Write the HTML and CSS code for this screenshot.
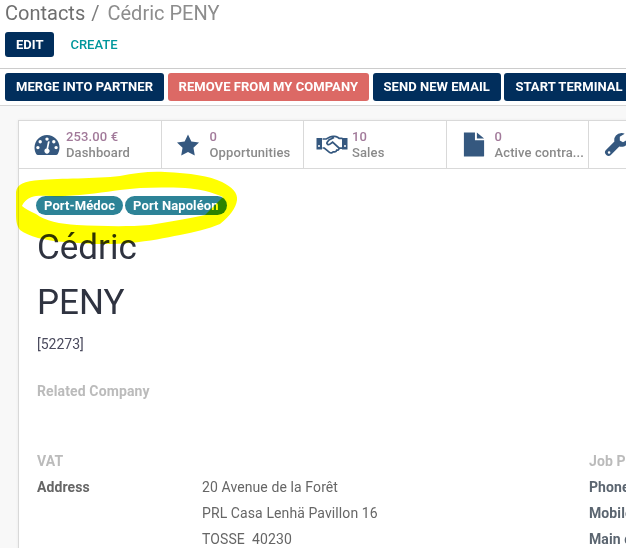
FILE: index.html
```html
<!DOCTYPE html>
<html lang="fr">
<head>
<meta charset="utf-8">
<title>Cédric PENY</title>
<link rel="stylesheet" href="styles.css">
</head>
<body>
<div class="page">
  <header class="panel">
    <div class="crumbs"><span class="crumb">Contacts</span><span class="sep">/</span><span class="crumb-current">Cédric PENY</span></div>
    <div class="main-buttons"><button class="btn btn-dark btn-edit">EDIT</button><button class="btn btn-link">CREATE</button></div>
  </header>
  <div class="actions">
    <button class="btn btn-dark">MERGE INTO PARTNER</button>
    <button class="btn btn-red">REMOVE FROM MY COMPANY</button>
    <button class="btn btn-dark">SEND NEW EMAIL</button>
    <button class="btn btn-dark">START TERMINAL</button>
  </div>
  <main class="content">
    <section class="sheet">
      <div class="stats">
        <div class="stat">
          <svg class="icon icon-gauge" viewBox="0 0 26 22"><path class="ic" fill-rule="evenodd" d="M13 1C6 1 0.5 6.6 0.5 13.5c0 2.6.7 4.6 1.7 6.4.4.7 1 1.1 1.8 1.1h18c.8 0 1.4-.4 1.8-1.1 1-1.8 1.7-3.8 1.7-6.4C25.500 6.600 20 1 13 1zM13 3.400a1.700 1.700 0 1 1 0 3.400 1.700 1.700 0 0 1 0-3.400zM6.200 6.100a1.700 1.700 0 1 1 0 3.400 1.700 1.700 0 0 1 0-3.400zM19.800 6.100a1.700 1.700 0 1 1 0 3.400 1.700 1.700 0 0 1 0-3.400zM3.900 11.900a1.700 1.700 0 1 1 0 3.400 1.700 1.700 0 0 1 0-3.400zM22.100 11.900a1.700 1.700 0 1 1 0 3.400 1.700 1.700 0 0 1 0-3.400zM15.500 8.300l-1.300 6.500c.9.500 1.400 1.300 1.400 2.300 0 1.500-1.200 2.600-2.600 2.600s-2.600-1.100-2.600-2.600c0-1.300.9-2.300 2.100-2.500l1.300-6.500c.1-.6.600-.9 1.200-.8.500.1.900.500.5 1z"/></svg>
          <div class="stat-text"><span class="value">253.00 €</span><span class="label">Dashboard</span></div>
        </div>
        <div class="stat">
          <svg class="icon icon-star" viewBox="0 0 24 23"><path class="ic" d="M12 .5l3.500 7.300 8 1.100-5.800 5.600 1.400 8L12 18.700l-7.100 3.800 1.400-8L.5 8.900l8-1.100z"/></svg>
          <div class="stat-text"><span class="value">0</span><span class="label">Opportunities</span></div>
        </div>
        <div class="stat">
          <svg class="icon icon-wide" viewBox="0 0 32 21"><path class="stroke" d="M6.500 4.500h3.800L14 2.500c1-.5 2-.7 3-.7h1.500c1.200 0 2.200.4 3.100 1l1.500 1h3.400M6.500 13.500h1.800l5.200 4.300c1.200 1 2.900.6 3.700-.5l1.100.1c1.300.2 2.200-.6 2.400-1.700 1.300.2 2.400-.7 2.400-2h3.400M18 3l-5 2.500-2 2.500c-.7 1.300 1.200 2.800 2.600 1.900l3-2.200 6.400 5.800"/><path class="ic" fill-rule="evenodd" d="M.5 3.500h5.500v11.500H.5zM2 11.500a1 1 0 1 0 2 0 1 1 0 0 0-2 0zM26 3.500h5.500v11.500H26zM28 11.500a1 1 0 1 0 2 0 1 1 0 0 0-2 0z"/></svg>
          <div class="stat-text"><span class="value">10</span><span class="label">Sales</span></div>
        </div>
        <div class="stat">
          <svg class="icon icon-file" viewBox="0 0 22 26"><path class="ic" d="M.5 0.500h11.500v8h9.500v16.500a.5.500 0 0 1-.5.500H.5zM14 .5l7.500 6.200H14z"/></svg>
          <div class="stat-text"><span class="value">0</span><span class="label">Active contra...</span></div>
        </div>
        <div class="stat stat-last">
          <svg class="icon" viewBox="0 0 24 24"><path class="ic" fill-rule="evenodd" d="M23.500 6.800c0 3.900-3.100 7-7 7-.8 0-1.500-.1-2.200-.4L5.600 22.200c-1.100 1.100-2.900 1.100-4 0l-.9-.9c-1.100-1.100-1.100-2.900 0-4l8.700-8.700A7.200 7.200 0 0 1 16.500 0c1.200 0 2.300.3 3.200.8l-4.900 3v3.700l3.200 1.800 5-3 .5.500zM4.100 18.200a1.300 1.300 0 1 0 0 2.600 1.300 1.300 0 0 0 0-2.600z"/></svg>
        </div>
      </div>
      <div class="body">
        <div class="tags"><span class="tag">Port-Médoc</span><span class="tag">Port Napoléon</span></div>
        <h1 class="name">Cédric</h1>
        <h1 class="name name-last">PENY</h1>
        <div class="ref">[52273]</div>
        <div class="company">Related Company</div>
        <div class="columns">
          <div class="col-left">
            <div class="row row-muted">VAT</div>
            <div class="row row-address">
              <span class="field">Address</span>
              <div class="address"><div>20 Avenue de la Forêt</div><div>PRL Casa Lenhä Pavillon 16</div><div>TOSSE&nbsp; 40230</div></div>
            </div>
          </div>
          <div class="col-right">
            <div class="row row-muted">Job Position</div>
            <div class="row field">Phone</div>
            <div class="row field">Mobile</div>
            <div class="row field">Main contact</div>
          </div>
        </div>
      </div>
    </section>
  </main>
  <svg class="highlight" width="626" height="548" viewBox="0 0 626 548"><path fill-rule="evenodd" d="M16 192C17 184 24 181 40 180C60 178 95 179 120 176C135 173 150 171 165 172C190 173 210 176 222 182C232 187 238 193 237 200C236 208 230 216 220 224C208 229 195 232 180 235C165 238 150 241 130 243C110 245 85 244 65 242C45 241 28 236 20 230C17 226 16 222 16 214ZM22 206C24 201 29 197 36 196C45 195 55 197 65 196C85 195 105 192 120 190C140 187 165 187 185 188C200 189 212 192 223 197L205 215C190 218 170 222 150 225C125 227 100 226 77 225C60 224 45 221 36 214C30 211 25 209 22 206Z"/></svg>
</div>
</body>
</html>
```
FILE: styles.css
```css
* { box-sizing: border-box; }
html, body { margin: 0; padding: 0; }
body { font-family: Roboto, "Liberation Sans", sans-serif; background: #fff; color: #4c4c4c; }
.page { position: relative; width: 626px; height: 548px; overflow: hidden; }

.panel { height: 69px; padding: 0 5px; border-bottom: 1px solid #ccc; }
.crumbs { height: 32px; font-size: 20px; line-height: 26px; white-space: nowrap; }
.crumb { color: #6f6f6f; }
.sep { color: #7d7d7d; margin: 0 8px 0 6px; }
.crumb-current { color: #8d8d8d; }
.main-buttons { display: flex; height: 25px; }

.btn { border: 1px solid transparent; border-radius: 3px; font: 700 13px/1 Roboto, sans-serif; letter-spacing: .05px; padding: 0 10px 2px; white-space: nowrap; flex: none; height: 28px; }
.btn-dark { background: #012e5c; color: #fff; }
.btn-red { background: #dc6965; color: #fff; }
.btn-link { background: transparent; color: #00979c; height: 25px; padding: 0 15px; font-weight: 500; letter-spacing: 0; }
.btn-edit { height: 25px; padding: 0 10px; letter-spacing: 0; }

.actions { display: flex; gap: 3.500px; height: 37px; padding: 4px 5px 0; border-bottom: 1px solid #d5d5d5; overflow: hidden; }

.content { background: #f8f8f8; padding: 14px 0 0 18px; height: 442px; }
.sheet { background: #fff; border: 1px solid #d9d9d9; border-right: 0; width: 620px; height: 440px; box-shadow: 0 0 3px rgba(0,0,0,.06); }

.stats { display: flex; height: 48px; border-bottom: 1px solid #d9d9d9; }
.stat { flex: none; width: 142.500px; height: 47px; display: flex; align-items: center; border-right: 1px solid #d9d9d9; padding-left: 15px; }
.stat-last { border-right: 0; }
.icon { width: 26px; height: 24px; flex: none; margin-right: 7px; }
.icon-gauge { margin-right: 6px; }
.icon-star { width: 24px; height: 22px; margin-left: -1px; margin-right: 10px; }
.icon-wide { width: 32px; margin-left: -3px; margin-right: 4px; }
.icon-file { width: 22px; height: 25px; margin-left: 1px; margin-right: 10px; }
.ic { fill: #35587f; }
.stroke { fill: none; stroke: #35587f; stroke-width: 1.700; }
.stat-text { display: flex; flex-direction: column; font-size: 13px; line-height: 16px; font-weight: 500; margin-top: 1px; letter-spacing: .12px; }
.value { color: #a27a9a; }
.label { color: #8a8a8a; }

.body { padding: 27px 0 0 18px; }
.tags { display: flex; gap: 2px; height: 19px; margin: 0 0 1px -1px; }
.tag { background: #2d8397; color: #fff; font-size: 13px; font-weight: 700; line-height: 19px; height: 19px; border-radius: 10px; padding: 0 8px; letter-spacing: .1px; }
.name { margin: 0; font-size: 35px; font-weight: 400; line-height: 40px; color: #2f3340; height: 55px; padding-top: 12px; }
.name-last { height: 55px; }
.ref { font-size: 14px; line-height: 18px; color: #4b4b5e; margin-top: 9px; }
.company { font-size: 14px; font-weight: 700; color: #bbb; line-height: 18px; margin-top: 29px; letter-spacing: .12px; }

.columns { display: flex; margin-top: 52px; }
.col-left { width: 552px; flex: none; }
.col-right { flex: none; white-space: nowrap; }
.row { font-size: 14px; line-height: 18px; height: 26px; letter-spacing: .1px; }
.row-muted { font-weight: 700; color: #bbb; }
.row-address { display: flex; height: auto; }
.field { font-weight: 700; color: #666; }
.row-address .field { width: 165px; flex: none; }
.address { color: #666; line-height: 26px; margin-top: -4px; }
.col-right .field { color: #5b6570; }

.highlight { position: absolute; left: 0; top: 0; mix-blend-mode: multiply; pointer-events: none; }
.highlight path { fill: #ffff00; }
```
